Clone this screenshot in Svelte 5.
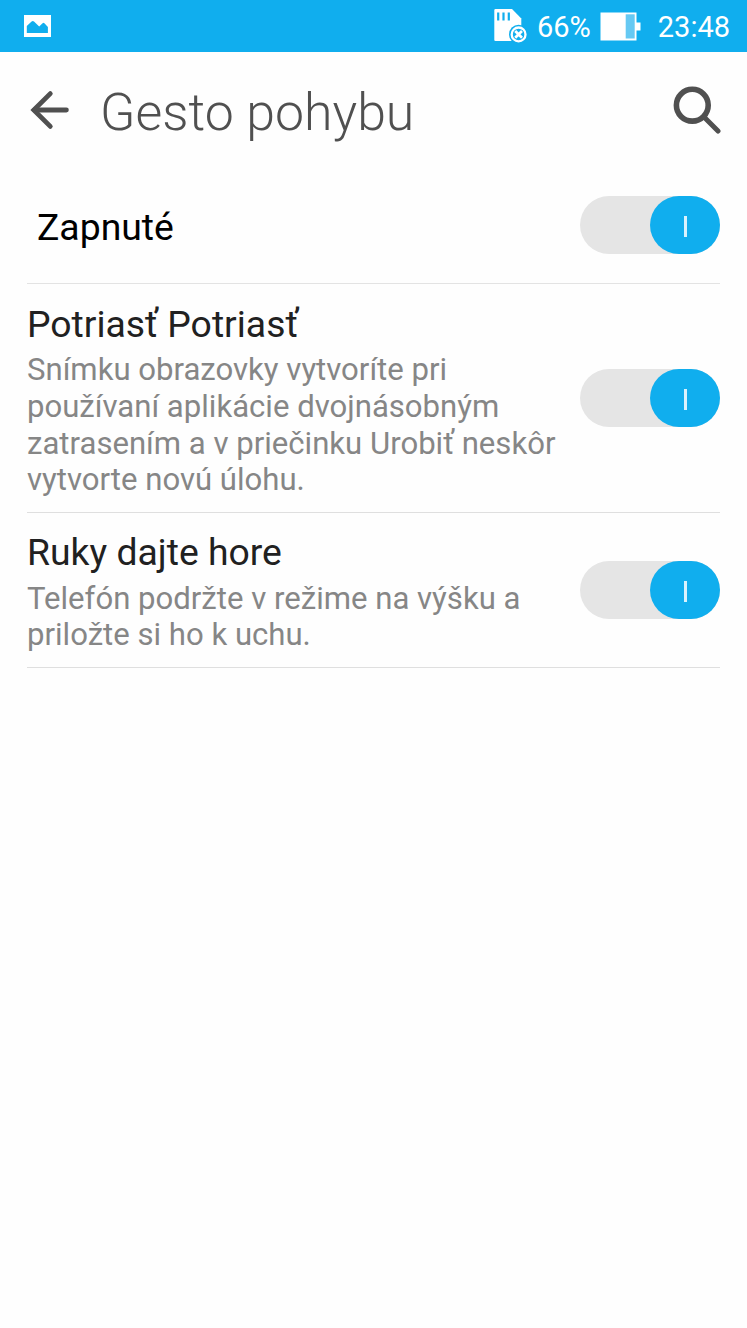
<script>
  let enabled = $state(true);
  let items = $state([
    {
      title: 'Potriasť Potriasť',
      lines: [
        'Snímku obrazovky vytvoríte pri',
        'používaní aplikácie dvojnásobným',
        'zatrasením a v priečinku Urobiť neskôr',
        'vytvorte novú úlohu.'
      ],
      on: true
    },
    {
      title: 'Ruky dajte hore',
      lines: ['Telefón podržte v režime na výšku a', 'priložte si ho k uchu.'],
      on: true
    }
  ]);
</script>

{#snippet toggle(on, label, flip)}
  <button class="switch" class:on role="switch" aria-checked={on} aria-label={label} onclick={flip}>
    <span class="thumb"><span class="mark"></span></span>
  </button>
{/snippet}

<div class="screen">
  <div class="status">
    <svg class="photo" width="27" height="22" viewBox="0 0 27 22">
      <path fill="#fff" fill-rule="evenodd" d="M0 0H27V22H0ZM2.8 18H23.9V12L20.4 8.2Q19.5 7.4 18.6 8.2L15.2 11.4L10 6.6Q8.8 5.6 7.6 6.6L2.8 11Z" />
    </svg>
    <div class="right">
      <svg class="sd" width="34" height="34" viewBox="0 0 34 34">
        <path fill="#fff" d="M2.5 0H19L28.3 9.5V32H2.5Q1.3 32 1.3 31V1Q1.3 0 2.5 0Z" />
        <path stroke="#10aeee" stroke-width="2.2" d="M5.2 3.6V11.6M10.5 3.6V11.6M15.8 3.6V11.6" />
        <circle cx="25.6" cy="25.4" r="9.6" fill="#10aeee" />
        <circle cx="25.6" cy="25.4" r="6.9" fill="none" stroke="#fff" stroke-width="2.3" />
        <path stroke="#fff" stroke-width="2.7" d="M22.2 22L29 28.8M29 22L22.2 28.8" />
      </svg>
      <span class="percent">66%</span>
      <svg class="battery" width="41" height="29" viewBox="0 0 41 29">
        <path fill="#fff" d="M.5 .5H36.5V10.5H40.5V18.5H36.5V28.5H.5Z" />
        <path fill="#66c9f3" d="M25.7 2.3H34.7V26.5H25.7Z" />
      </svg>
      <span class="time">23:48</span>
    </div>
  </div>

  <header>
    <svg width="40" height="40" viewBox="0 0 40 40" fill="none" stroke="#505050" stroke-width="4.8" stroke-linecap="round">
      <path stroke-linejoin="miter" d="M21.3 3.6L4.8 20L21.3 36.4" />
      <path d="M5.5 20H37.4" />
    </svg>
    <h1>Gesto pohybu</h1>
    <svg width="48" height="48" viewBox="0 0 48 48" fill="none" stroke="#505050" stroke-linecap="round">
      <circle cx="19.3" cy="19.2" r="15.9" stroke-width="5.6" />
      <path stroke-width="5" d="M31.5 31.5L45 45" />
    </svg>
  </header>

  <main>
    <section class="master">
      <h2>Zapnuté</h2>
      {@render toggle(enabled, 'Zapnuté', () => (enabled = !enabled))}
    </section>
    {#each items as item}
      <section>
        <div class="text">
          <h2>{item.title}</h2>
          <p>{item.lines.join('\n')}</p>
        </div>
        {@render toggle(item.on, item.title, () => (item.on = !item.on))}
      </section>
    {/each}
  </main>
</div>

<style>
  :global(body) {
    margin: 0;
    background: #fefefe;
  }
  .screen {
    width: 747px;
    height: 1328px;
    overflow: hidden;
    font-family: Roboto, sans-serif;
    background: #fefefe;
  }
  .status {
    box-sizing: border-box;
    height: 52px;
    padding: 0 17px 0 24px;
    display: flex;
    align-items: center;
    justify-content: space-between;
    background: #10aeee;
    color: #fff;
    font-size: 29px;
    line-height: 34px;
  }
  .right {
    display: flex;
    align-items: center;
  }
  .sd {
    margin-right: 10px;
  }
  .percent {
    margin-right: 9px;
    padding-top: 2px;
  }
  .battery {
    margin-right: 17px;
  }
  .time {
    padding-top: 2px;
  }
  header {
    box-sizing: border-box;
    height: 116px;
    padding: 0 26px 0 29px;
    display: flex;
    align-items: center;
  }
  h1 {
    flex: 1;
    margin: 5px 0 0 31px;
    font-size: 51.8px;
    font-weight: 300;
    line-height: 62px;
    color: #505050;
    white-space: nowrap;
  }
  main {
    padding: 0 27px;
  }
  section {
    box-sizing: border-box;
    display: flex;
    align-items: center;
    justify-content: space-between;
    padding: 17.5px 0 12.6px;
    border-bottom: 1px solid #dfdfdf;
  }
  .master {
    height: 116px;
    padding: 0 0 0 10px;
    border-bottom: 1px solid #e3e3e3;
  }
  h2 {
    margin: 0;
    font-size: 37.35px;
    font-weight: 400;
    line-height: 44px;
    color: #212121;
    white-space: nowrap;
  }
  .master h2 {
    color: #000;
    margin-top: 3px;
  }
  p {
    margin: 6.7px 0 0;
    font-size: 31.12px;
    line-height: 36.7px;
    color: #868686;
    white-space: pre;
  }
  .switch {
    display: flex;
    flex: none;
    width: 140px;
    height: 58px;
    margin: 0 0 5px;
    padding: 0;
    border: 0;
    border-radius: 29px;
    background: #e5e5e5;
  }
  .master .switch {
    margin: 0 0 1px;
  }
  .on {
    justify-content: flex-end;
  }
  .thumb {
    display: flex;
    align-items: center;
    justify-content: center;
    width: 70px;
    height: 58px;
    border-radius: 29px;
    background: #10aeee;
  }
  .mark {
    width: 3px;
    height: 21px;
    margin-top: 3px;
    background: #d9f2fd;
  }
</style>
